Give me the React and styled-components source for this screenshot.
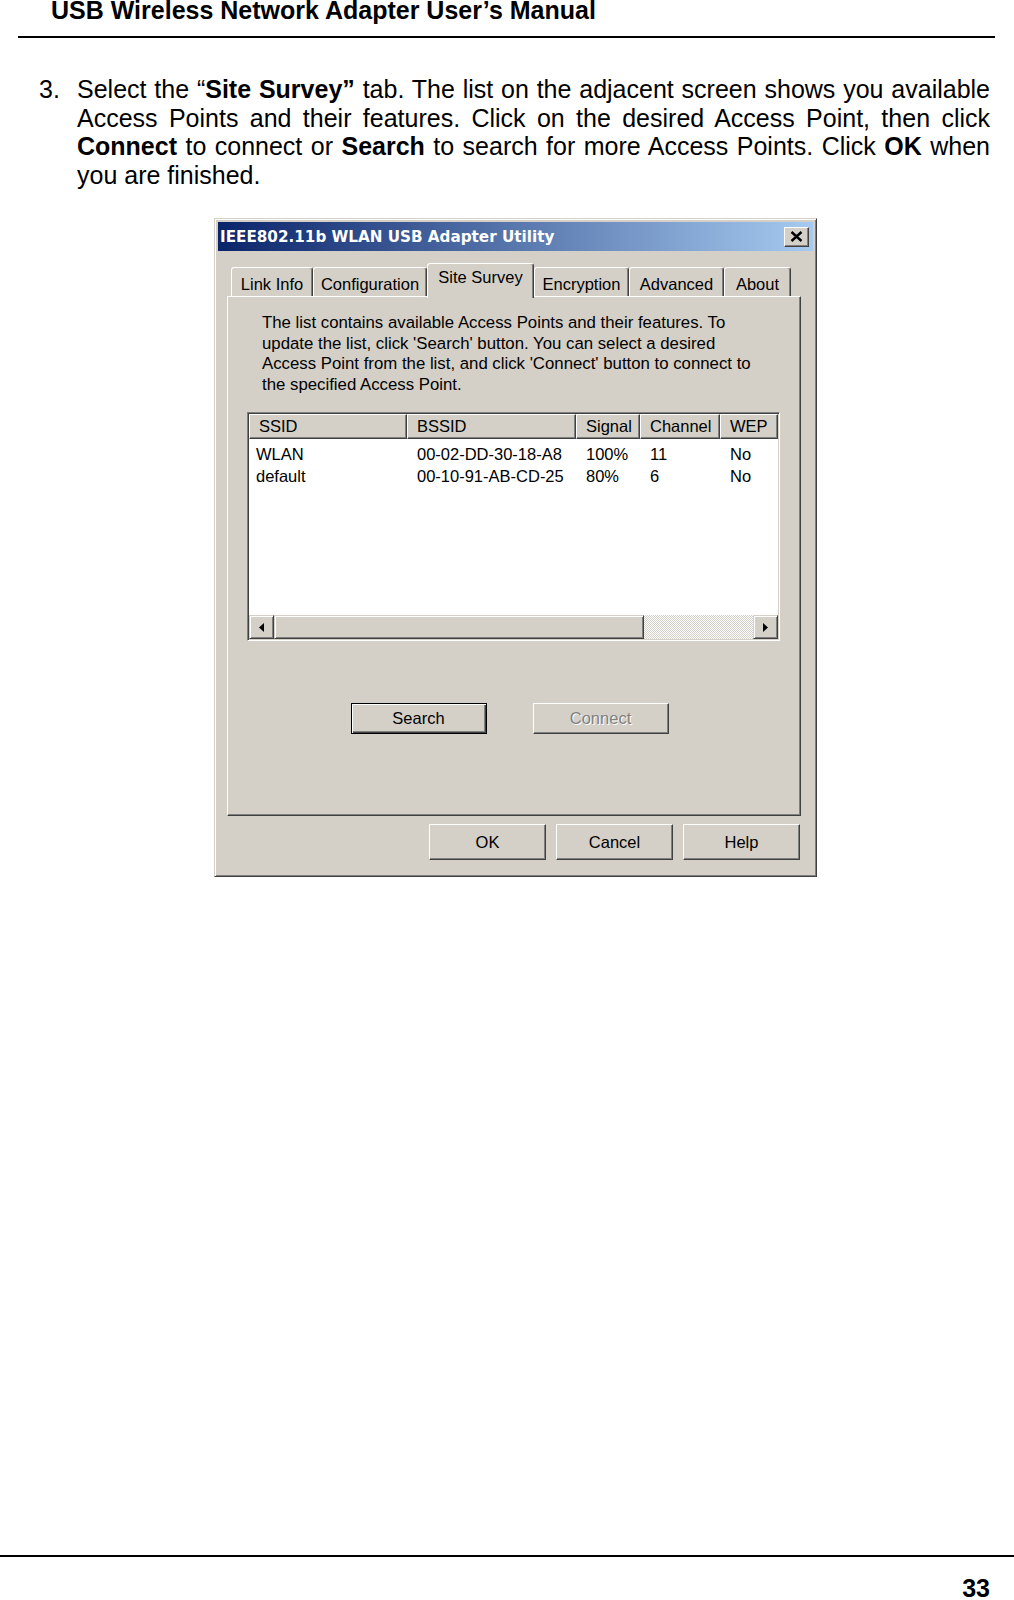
import React from 'react';
import styled, { createGlobalStyle } from 'styled-components';

const GlobalStyle = createGlobalStyle`
  html, body {
    margin: 0;
    padding: 0;
    background: #fff;
  }
  body {
    font-family: "Liberation Sans", Arial, sans-serif;
    color: #000;
  }
`;

const Page = styled.div`
  width: 1014px;
  height: 1600px;
  display: flex;
  flex-direction: column;
  overflow: hidden;
`;

const Header = styled.header`
  margin: 0 19px 0 18px;
  height: 36px;
  padding-left: 33px;
  border-bottom: 2px solid #000;
  font-size: 25px;
  font-weight: bold;
  line-height: 20px;
`;

const Content = styled.main`
  flex: 1;
`;

const Step = styled.div`
  display: flex;
  margin: 37px 0 0 39px;
  font-size: 25px;
  line-height: 28.6px;
`;

const StepNum = styled.div`
  width: 38px;
  flex: none;
`;

const StepText = styled.div`
  width: 913px;
`;

const Line = styled.div`
  text-align: justify;
  text-align-last: ${(p) => (p.$last ? 'left' : 'justify')};
`;

/* ---- the dialog screenshot ---- */

const Window = styled.div`
  box-sizing: border-box;
  width: 603px;
  height: 659px;
  margin: 29px 0 0 214px;
  padding: 3px;
  display: flex;
  flex-direction: column;
  background: #d4d0c8;
  border: 1px solid;
  border-color: #d4d0c8 #404040 #404040 #d4d0c8;
  box-shadow: inset 1px 1px #fff, inset -1px -1px #808080;
  font-family: "Liberation Sans", Arial, sans-serif;
  font-size: 16.5px;
`;

const TitleBar = styled.div`
  height: 29px;
  flex: none;
  display: flex;
  align-items: center;
  justify-content: space-between;
  padding: 0 4px 0 2px;
  background: linear-gradient(to right, #0a246a, #a6caf0);
`;

const Title = styled.span`
  color: #fff;
  font-family: "DejaVu Sans", Verdana, sans-serif;
  font-weight: bold;
  font-size: 15.2px;
`;

const CloseButton = styled.div`
  box-sizing: border-box;
  width: 25px;
  height: 20px;
  display: flex;
  align-items: center;
  justify-content: center;
  background: #d4d0c8;
  border: 1px solid;
  border-color: #fff #404040 #404040 #fff;
  box-shadow: inset -1px -1px #808080;
`;

const Body = styled.div`
  flex: 1;
  display: flex;
  flex-direction: column;
  padding: 12px 12px 13px 9px;
`;

const TabStrip = styled.div`
  display: flex;
  align-items: flex-end;
  height: 33px;
  padding-left: 4px;
  position: relative;
  z-index: 1;
`;

const Tab = styled.div`
  box-sizing: border-box;
  flex: none;
  width: ${(p) => p.$w}px;
  height: ${(p) => (p.$active ? '35px' : '29px')};
  margin-bottom: ${(p) => (p.$active ? '-2px' : '0')};
  padding-top: 4px;
  display: flex;
  align-items: ${(p) => (p.$active ? 'flex-start' : 'center')};
  justify-content: center;
  background: #d4d0c8;
  border: 1px solid;
  border-bottom: none;
  border-color: #fff #404040 transparent #fff;
  border-radius: 3px 3px 0 0;
  box-shadow: inset -1px 0 #808080;
  white-space: nowrap;
  position: relative;
  z-index: ${(p) => (p.$active ? 2 : 1)};
`;

const Panel = styled.div`
  flex: 1;
  display: flex;
  flex-direction: column;
  padding: 16px 20px 0 19px;
  border: 1px solid;
  border-color: #fff #404040 #404040 #fff;
  box-shadow: inset -1px -1px #808080;
`;

const Description = styled.p`
  margin: 0 0 17px 15px;
  font-size: 16.8px;
  line-height: 20.4px;
  white-space: nowrap;
`;

const ListView = styled.div`
  box-sizing: border-box;
  height: 229px;
  display: flex;
  flex-direction: column;
  background: #fff;
  border: 1px solid;
  border-color: #808080 #fff #fff #808080;
  box-shadow: inset 1px 1px #404040, inset -1px -1px #d4d0c8;
  padding: 1px;
`;

const HeaderRow = styled.div`
  display: flex;
  height: 25px;
  flex: none;
`;

const HeaderCell = styled.div`
  box-sizing: border-box;
  width: ${(p) => p.$w}px;
  display: flex;
  align-items: center;
  padding-left: 9px;
  background: #d4d0c8;
  border: 1px solid;
  border-color: #fff #404040 #404040 #fff;
  box-shadow: inset -1px -1px #808080;
`;

const Rows = styled.div`
  flex: 1;
  padding-top: 4px;
`;

const Row = styled.div`
  display: flex;
  height: 22px;
  align-items: center;
`;

const Cell = styled.div`
  box-sizing: border-box;
  width: ${(p) => p.$w}px;
  padding-left: ${(p) => p.$pad}px;
  white-space: nowrap;
`;

const ScrollBar = styled.div`
  display: flex;
  height: 24px;
  flex: none;
`;

const ScrollButton = styled.div`
  box-sizing: border-box;
  width: ${(p) => p.$w}px;
  display: flex;
  align-items: center;
  justify-content: center;
  background: #d4d0c8;
  border: 1px solid;
  border-color: #d4d0c8 #404040 #404040 #d4d0c8;
  box-shadow: inset 1px 1px #fff, inset -1px -1px #808080;
`;

const ScrollTrack = styled.div`
  flex: 1;
  background: repeating-conic-gradient(#d4d0c8 0 25%, #fff 0 50%) 0 0 / 2px 2px;
`;

const ActionRow = styled.div`
  display: flex;
  justify-content: ${(p) => p.$align};
  gap: ${(p) => p.$gap}px;
  padding-right: ${(p) => p.$pr}px;
  margin-top: ${(p) => p.$mt}px;
`;

const Button = styled.div`
  box-sizing: border-box;
  width: ${(p) => p.$w}px;
  height: ${(p) => p.$h}px;
  display: flex;
  align-items: center;
  justify-content: center;
  background: #d4d0c8;
  color: ${(p) => (p.$disabled ? '#808080' : '#000')};
  text-shadow: ${(p) => (p.$disabled ? '1px 1px #fff' : 'none')};
  border: 1px solid;
  border-color: ${(p) => (p.$default ? '#000' : '#fff #404040 #404040 #fff')};
  box-shadow: ${(p) =>
    p.$default
      ? 'inset 1px 1px #fff, inset -1px -1px #404040, inset -2px -2px #808080'
      : 'inset -1px -1px #808080'};
`;

const Footer = styled.footer`
  height: 24px;
  padding: 19px 24px 0 0;
  border-top: 2px solid #000;
  text-align: right;
  font-size: 25px;
  font-weight: bold;
  line-height: 25px;
`;

const tabs = [
  { label: 'Link Info', w: 82 },
  { label: 'Configuration', w: 114 },
  { label: 'Site Survey', w: 107 },
  { label: 'Encryption', w: 95 },
  { label: 'Advanced', w: 95 },
  { label: 'About', w: 67 },
];

const columns = [
  { label: 'SSID', w: 158, pad: 7 },
  { label: 'BSSID', w: 169, pad: 10 },
  { label: 'Signal', w: 64, pad: 10 },
  { label: 'Channel', w: 80, pad: 10 },
  { label: 'WEP', w: 58, pad: 10 },
];

const accessPoints = [
  ['WLAN', '00-02-DD-30-18-A8', '100%', '11', 'No'],
  ['default', '00-10-91-AB-CD-25', '80%', '6', 'No'],
];

const CloseIcon = () => (
  <svg width="13" height="11" viewBox="0 0 13 11">
    <path d="M1.5 1 L11.5 10 M11.5 1 L1.5 10" stroke="#000" strokeWidth="2.4" />
  </svg>
);

const Arrow = ({ dir }) => (
  <svg width="5" height="9" viewBox="0 0 5 9">
    {dir === 'left' ? <polygon points="5,0 0,4.5 5,9" fill="#000" /> : <polygon points="0,0 5,4.5 0,9" fill="#000" />}
  </svg>
);

const SiteSurveyDialog = () => (
  <Window>
    <TitleBar>
      <Title>IEEE802.11b WLAN USB Adapter Utility</Title>
      <CloseButton><CloseIcon /></CloseButton>
    </TitleBar>
    <Body>
      <TabStrip>
        {tabs.map((t) => (
          <Tab key={t.label} $w={t.w} $active={t.label === 'Site Survey'}>{t.label}</Tab>
        ))}
      </TabStrip>
      <Panel>
        <Description>
          The list contains available Access Points and their features. To<br />
          update the list, click 'Search' button. You can select a desired<br />
          Access Point from the list, and click 'Connect' button to connect to<br />
          the specified Access Point.
        </Description>
        <ListView>
          <HeaderRow>
            {columns.map((c) => (
              <HeaderCell key={c.label} $w={c.w}>{c.label}</HeaderCell>
            ))}
          </HeaderRow>
          <Rows>
            {accessPoints.map((ap) => (
              <Row key={ap[1]}>
                {ap.map((v, i) => (
                  <Cell key={i} $w={columns[i].w} $pad={columns[i].pad}>{v}</Cell>
                ))}
              </Row>
            ))}
          </Rows>
          <ScrollBar>
            <ScrollButton $w={25}><Arrow dir="left" /></ScrollButton>
            <ScrollButton $w={370} />
            <ScrollTrack />
            <ScrollButton $w={25}><Arrow dir="right" /></ScrollButton>
          </ScrollBar>
        </ListView>
        <ActionRow $align="center" $gap={46} $pr={8} $mt={62}>
          <Button $w={136} $h={31} $default>Search</Button>
          <Button $w={136} $h={31} $disabled>Connect</Button>
        </ActionRow>
      </Panel>
      <ActionRow $align="flex-end" $gap={10} $pr={1} $mt={8}>
        <Button $w={117} $h={36}>OK</Button>
        <Button $w={117} $h={36}>Cancel</Button>
        <Button $w={117} $h={36}>Help</Button>
      </ActionRow>
    </Body>
  </Window>
);

const App = () => (
  <Page>
    <GlobalStyle />
    <Header>USB Wireless Network Adapter User’s Manual</Header>
    <Content>
      <Step>
        <StepNum>3.</StepNum>
        <StepText>
          <Line>Select the “<b>Site Survey”</b> tab. The list on the adjacent screen shows you available</Line>
          <Line>Access Points and their features. Click on the desired Access Point, then click</Line>
          <Line><b>Connect</b> to connect or <b>Search</b> to search for more Access Points. Click <b>OK</b> when</Line>
          <Line $last>you are finished.</Line>
        </StepText>
      </Step>
      <SiteSurveyDialog />
    </Content>
    <Footer>33</Footer>
  </Page>
);

export default App;
